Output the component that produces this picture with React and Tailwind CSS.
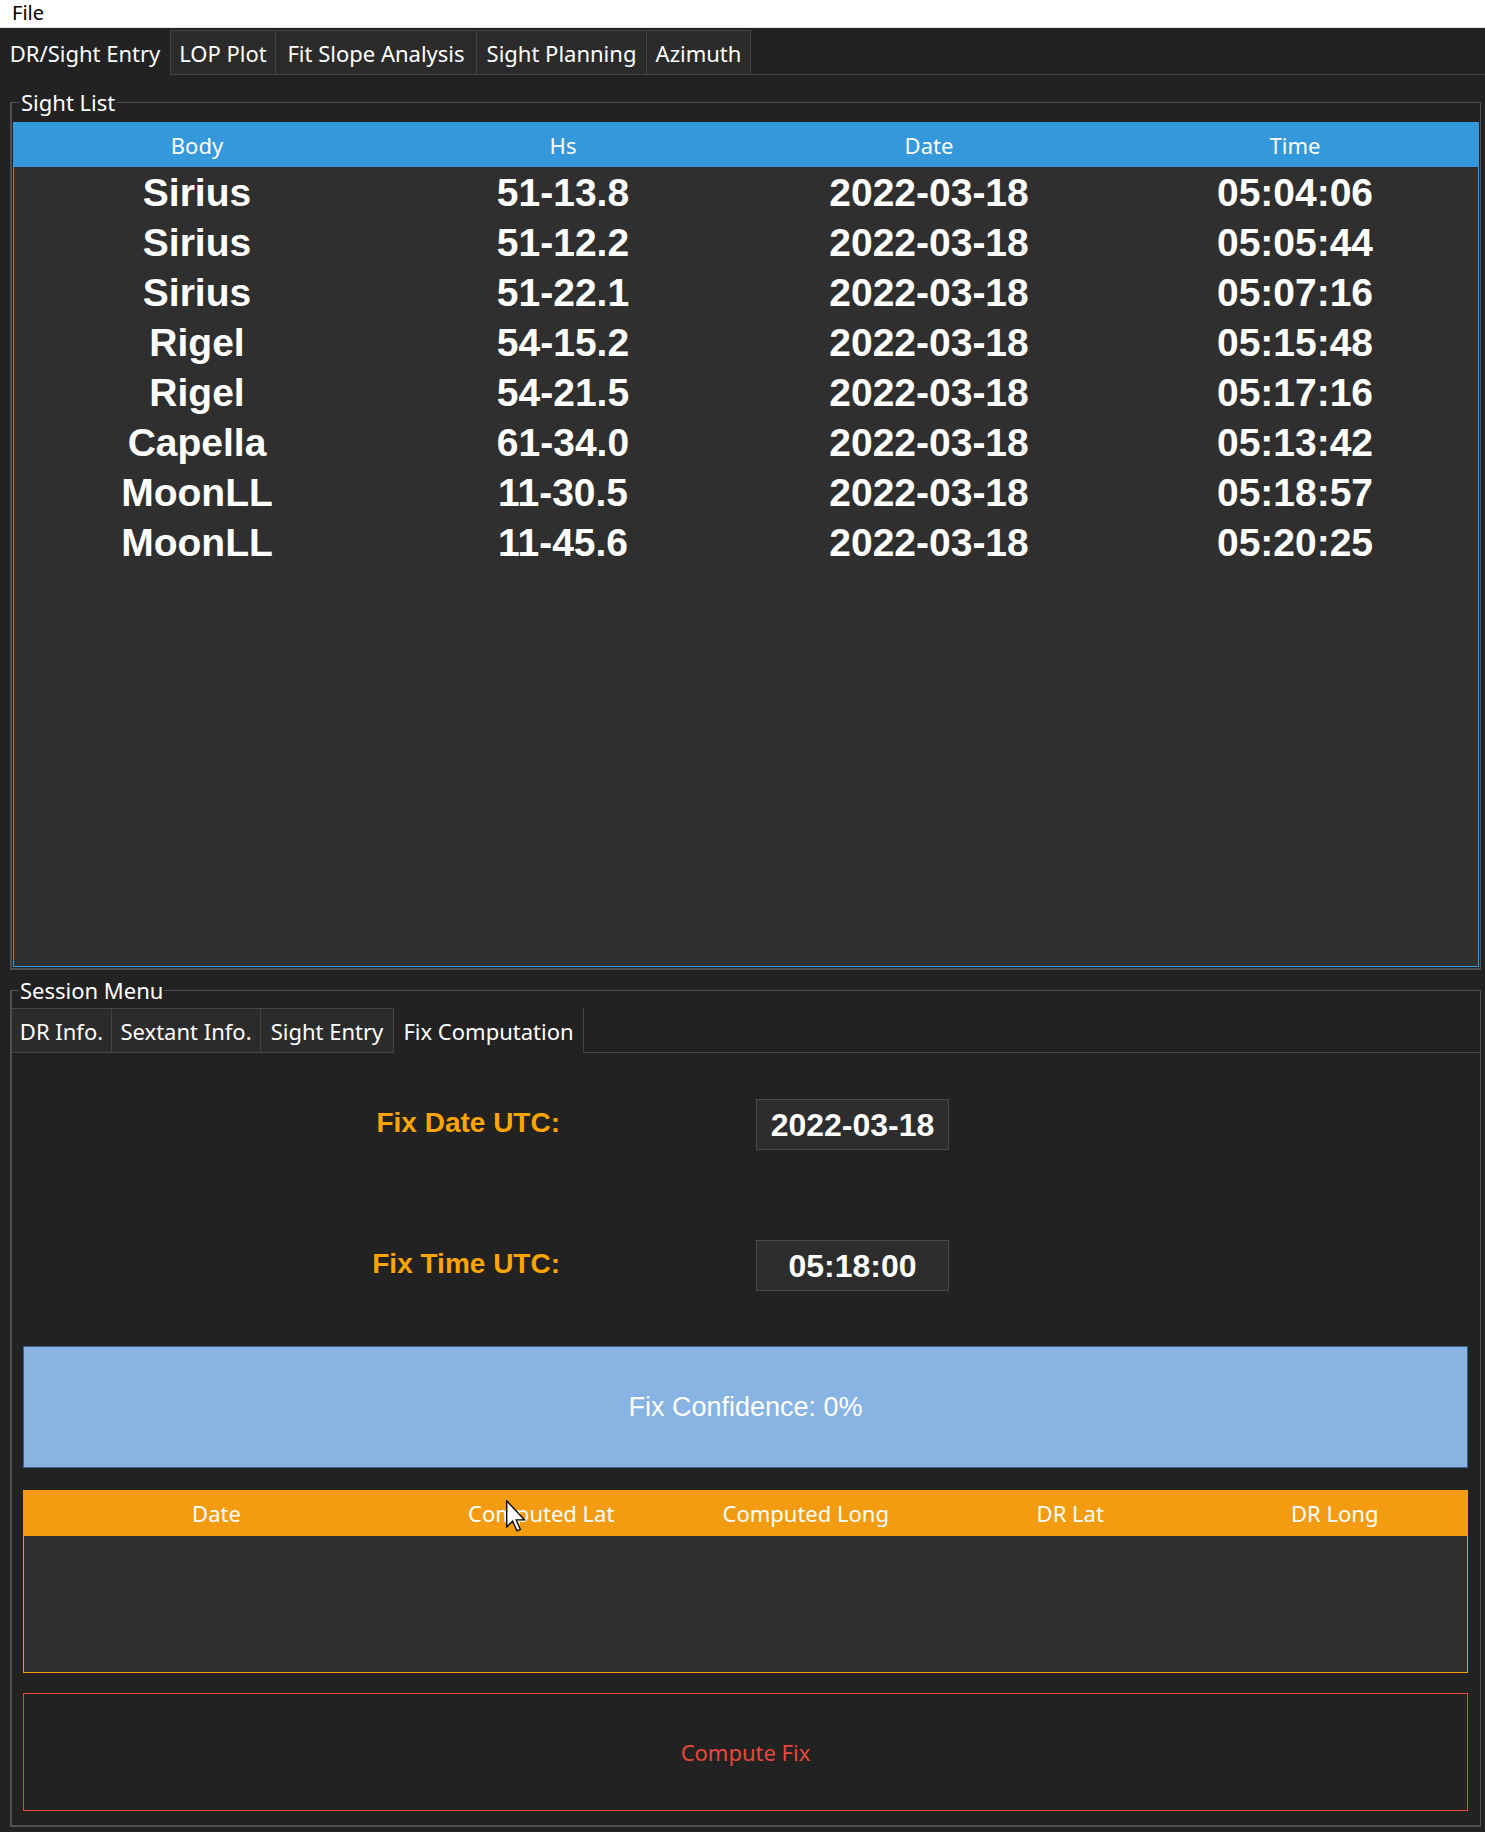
import React from "react";

const sights = [
  ["Sirius", "51-13.8", "2022-03-18", "05:04:06"],
  ["Sirius", "51-12.2", "2022-03-18", "05:05:44"],
  ["Sirius", "51-22.1", "2022-03-18", "05:07:16"],
  ["Rigel", "54-15.2", "2022-03-18", "05:15:48"],
  ["Rigel", "54-21.5", "2022-03-18", "05:17:16"],
  ["Capella", "61-34.0", "2022-03-18", "05:13:42"],
  ["MoonLL", "11-30.5", "2022-03-18", "05:18:57"],
  ["MoonLL", "11-45.6", "2022-03-18", "05:20:25"],
];

const mainTabs = [
  { label: "DR/Sight Entry", w: "w-[171px]", active: true },
  { label: "LOP Plot", w: "w-[105px]" },
  { label: "Fit Slope Analysis", w: "w-[201px]" },
  { label: "Sight Planning", w: "w-[170px]" },
  { label: "Azimuth", w: "w-[104px]" },
];

const sessionTabs = [
  { label: "DR Info.", w: "w-[100px]" },
  { label: "Sextant Info.", w: "w-[149px]" },
  { label: "Sight Entry", w: "w-[133px]" },
  { label: "Fix Computation", w: "w-[190px]", active: true },
];

const TabStrip = ({ tabs, height }) => (
  <div className={`flex ${height}`}>
    {tabs.map((t) =>
      t.active ? (
        <div
          key={t.label}
          className={`${t.w} shrink-0 flex items-center justify-center pt-[2px] bg-[#222222] border-r border-[#444444]`}
        >
          {t.label}
        </div>
      ) : (
        <div
          key={t.label}
          className={`${t.w} shrink-0 flex items-center justify-center pt-[2px] bg-[#2b2b2b] border-t border-r border-b border-[#444444]`}
        >
          {t.label}
        </div>
      )
    )}
    <div className="flex-1 border-b border-[#444444]" />
  </div>
);

const Cursor = () => (
  <svg
    className="absolute left-[505px] top-[1500px]"
    width="22"
    height="32"
    viewBox="0 0 12 19"
  >
    <path
      d="M0.5 0.5 L0.5 16 L4 12.6 L6.6 18.3 L8.6 17.4 L6.1 11.8 L11 11.8 Z"
      fill="#ffffff"
      stroke="#000000"
      strokeWidth="0.8"
      strokeLinejoin="miter"
    />
  </svg>
);

const App = () => {
  return (
    <div className="relative w-[1485px] h-[1832px] overflow-hidden bg-[#222222] text-white font-['Noto_Sans',sans-serif] text-[22px]">
      <div className="h-[28px] bg-white text-black text-[20px] leading-[26px] pl-[12px] border-b border-[#e6e6e6]">
        File
      </div>

      <div className="pt-[2px]">
        <TabStrip tabs={mainTabs} height="h-[45px]" />
      </div>

      <div className="pl-[10px] pr-[4px]">
        {/* Sight List */}
        <fieldset className="mt-[12px] border-t border-r border-l-2 border-b-2 border-[#505050] px-[1px] pb-[1px]">
          <legend className="ml-[7px] px-[1px] leading-[30px]">Sight List</legend>
          <div className="mt-[5px] h-[845px] bg-[#2f2f2f] border border-[#3498db]">
            <div className="grid grid-cols-4 h-[44px] items-center bg-[#3498db] text-center">
              <div>Body</div>
              <div>Hs</div>
              <div>Date</div>
              <div>Time</div>
            </div>
            {sights.map((s, i) => (
              <div
                key={i}
                className="grid grid-cols-4 h-[50px] pt-[4px] items-start leading-[43px] text-center font-['Liberation_Sans',Arial,sans-serif] font-bold text-[39px]"
              >
                {s.map((c, j) => (
                  <div key={j}>{c}</div>
                ))}
              </div>
            ))}
          </div>
        </fieldset>

        {/* Session Menu */}
        <fieldset className="mt-[5px] border-t border-r border-l-2 border-b-2 border-[#505050] pb-[14px]">
          <legend className="ml-[7px] px-[1px] leading-[30px]">Session Menu</legend>
          <div className="mt-[3px]">
            <TabStrip tabs={sessionTabs} height="h-[45px]" />
          </div>

          <div className="pl-[11px] pr-[12px]">
            <div className="mt-[46px] flex items-center h-[51px]">
              <div className="w-[537px] pb-[3px] text-right font-['Liberation_Sans',Arial,sans-serif] font-bold text-[28px] text-[#ffa500]">
                Fix Date UTC:
              </div>
              <div className="ml-[196px] w-[193px] h-[51px] flex items-center justify-center bg-[#2d2d2d] border border-[#4a4a4a] font-['Liberation_Sans',Arial,sans-serif] font-bold text-[32px]">
                2022-03-18
              </div>
            </div>

            <div className="mt-[90px] flex items-center h-[51px]">
              <div className="w-[537px] pb-[3px] text-right font-['Liberation_Sans',Arial,sans-serif] font-bold text-[28px] text-[#ffa500]">
                Fix Time UTC:
              </div>
              <div className="ml-[196px] w-[193px] h-[51px] flex items-center justify-center bg-[#2d2d2d] border border-[#4a4a4a] font-['Liberation_Sans',Arial,sans-serif] font-bold text-[32px]">
                05:18:00
              </div>
            </div>

            <div className="mt-[55px] h-[122px] flex items-center justify-center bg-[#88b4e4] border border-[#3f5f86] font-['Liberation_Sans',Arial,sans-serif] text-[27px]">
              Fix Confidence: 0%
            </div>

            <div className="mt-[22px] h-[183px] bg-[#2f2f2f] border border-[#f39c12]">
              <div className="grid grid-cols-[385px_1fr_1fr_1fr_1fr] h-[45px] items-center bg-[#f39c12] text-center">
                <div>Date</div>
                <div>Computed Lat</div>
                <div>Computed Long</div>
                <div>DR Lat</div>
                <div>DR Long</div>
              </div>
            </div>

            <button className="mt-[20px] w-full h-[118px] flex items-center justify-center border border-[#e8473a] text-[#e8473a]">
              Compute Fix
            </button>
          </div>
        </fieldset>
      </div>

      <Cursor />
    </div>
  );
};

export default App;
